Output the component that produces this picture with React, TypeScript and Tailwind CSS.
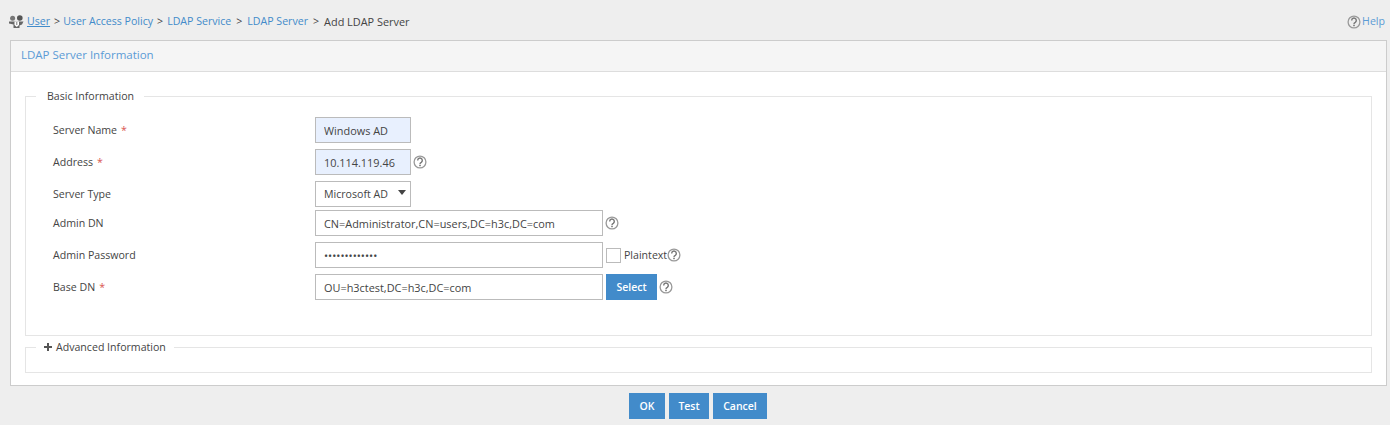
const FONT = 'font-["Open_Sans","Noto_Sans",sans-serif]';

function HelpIcon() {
  return (
    <svg width="14" height="14" viewBox="0 0 14 14" fill="none" className="shrink-0" aria-hidden>
      <circle cx="7" cy="7" r="5.9" stroke="#999" strokeWidth="1.3" />
      <path d="M4.7 5.4a2.3 2.3 0 1 1 3.6 1.9C7.5 7.8 7 8.2 7 9" stroke="#777" strokeWidth="1.4" />
      <rect x="6.2" y="9.7" width="1.6" height="1.5" fill="#777" />
    </svg>
  );
}

function UserIcon() {
  return (
    <svg width="15" height="14" viewBox="0 0 15 14" className="shrink-0" aria-hidden>
      <circle cx="3.6" cy="3.2" r="2.5" fill="#777" />
      <circle cx="10.8" cy="3" r="2.8" fill="#555" />
      <path d="M0 6.5h14.5L13 9.5l-2.5 1V13H4.5V9.5L0 8.5z" fill="#666" />
      <path d="M5.5 6.5h4.5v3.5L7.8 12 5.5 10z" fill="#fff" />
      <path d="M7.8 7v3" stroke="#777" strokeWidth="1" />
    </svg>
  );
}

function Req() {
  return <span className="ml-1 text-[#d9534f]">*</span>;
}

function Row({ label, required, mt, children }: { label: string; required?: boolean; mt: string; children: React.ReactNode }) {
  return (
    <div className={`flex h-[26px] items-center ${mt}`}>
      <label className="w-[262px] shrink-0 pt-[2px] text-[#444]">
        {label}
        {required && <Req />}
      </label>
      {children}
    </div>
  );
}

function TextBox({ value, wide, filled, type = 'text' }: { value: string; wide?: boolean; filled?: boolean; type?: string }) {
  return (
    <input
      type={type}
      readOnly
      value={value}
      className={`h-[26px] border border-[#bbb] px-2 text-[10.9px] text-[#444] outline-none ${wide ? 'w-[288px]' : 'w-[96px]'} ${filled ? 'bg-[#e8f0fe]' : 'bg-white'}`}
    />
  );
}

function BlueButton({ children, className }: { children: React.ReactNode; className: string }) {
  return (
    <button type="button" className={`h-[26px] bg-[#428bca] pt-[1px] text-[10.5px] font-semibold text-white ${className}`}>
      {children}
    </button>
  );
}

export default function App() {
  return (
    <div className={`h-[425px] w-[1390px] overflow-hidden bg-[#eeeeee] text-[10.6px] text-[#444] ${FONT}`}>
      <div className="flex h-10 items-center justify-between pt-[4px] pl-[9px] pr-[5px]">
        <div className="flex items-center gap-[2px]">
          <UserIcon />
          <a className="ml-[1px] text-[#428bca] underline">User</a>
          <span className="ml-[2px] mr-[1px]">&gt;</span>
          <a className="text-[#428bca]">User Access Policy</a>
          <span className="mx-[2px]">&gt;</span>
          <a className="text-[#428bca]">LDAP Service</a>
          <span className="mx-[3px]">&gt;</span>
          <a className="text-[#428bca]">LDAP Server</a>
          <span className="mx-[3px]">&gt;</span>
          <span className="text-[10.9px]">Add LDAP Server</span>
        </div>
        <div className="flex items-center">
          <HelpIcon />
          <a className="ml-[1px] text-[#5b9bd5]">Help</a>
        </div>
      </div>

      <div className="ml-[10px] w-[1377px] border border-[#ccc] bg-white">
        <div className="flex h-[31px] items-center border-b border-[#ddd] bg-[#f5f5f5] pb-[2px] pl-[10px] text-[11.5px] text-[#5b9bd5]">
          LDAP Server Information
        </div>

        <div className="px-[14px] pt-[16px] pb-[12px]">
          <fieldset className="h-[248px] border border-[#e5e5e5]">
            <legend className="ml-[10px] pr-[10px] pl-[11px] leading-[16px]">Basic Information</legend>
            <div className="pl-[27px]">
              <Row label="Server Name" required mt="mt-[13px]">
                <TextBox value="Windows AD" filled />
              </Row>
              <Row label="Address" required mt="mt-[6px]">
                <TextBox value="10.114.119.46" filled />
                <span className="ml-[2px]"><HelpIcon /></span>
              </Row>
              <Row label="Server Type" mt="mt-[6px]">
                <div className="flex h-[26px] w-[96px] items-center justify-between border border-[#bbb] bg-white pr-[4px] pl-2">
                  <span className="pt-[1px]">Microsoft AD</span>
                  <svg width="8" height="5" viewBox="0 0 8 5" className="mb-[3px]" aria-hidden>
                    <path d="M0 0h8L4 5z" fill="#444" />
                  </svg>
                </div>
              </Row>
              <Row label="Admin DN" mt="mt-[3px]">
                <TextBox value="CN=Administrator,CN=users,DC=h3c,DC=com" wide />
                <span className="ml-[2px]"><HelpIcon /></span>
              </Row>
              <Row label="Admin Password" mt="mt-[6px]">
                <TextBox value="1234567890123" wide type="password" />
                <span className="ml-[3px] h-[15px] w-[15px] border border-[#bbb] bg-white" />
                <span className="ml-[3px] pt-[2px]">Plaintext</span>
                <HelpIcon />
              </Row>
              <Row label="Base DN" required mt="mt-[6px]">
                <TextBox value="OU=h3ctest,DC=h3c,DC=com" wide />
                <BlueButton className="ml-[3px] w-[51px]">Select</BlueButton>
                <span className="ml-[2px]"><HelpIcon /></span>
              </Row>
            </div>
          </fieldset>

          <fieldset className="mt-[3px] h-[34px] border border-[#e5e5e5]">
            <legend className="ml-[10px] flex items-center px-[8px] leading-[16px]">
              <svg width="8" height="8" viewBox="0 0 8 8" className="mr-[4px]" aria-hidden>
                <path d="M3 0h2v3h3v2H5v3H3V5H0V3h3z" fill="#555" />
              </svg>
              Advanced Information
            </legend>
          </fieldset>
        </div>
      </div>

      <div className="mt-[7px] flex justify-center gap-[4px] pl-[6px]">
        <BlueButton className="w-[36px]">OK</BlueButton>
        <BlueButton className="w-[40px]">Test</BlueButton>
        <BlueButton className="w-[54px]">Cancel</BlueButton>
      </div>
    </div>
  );
}
